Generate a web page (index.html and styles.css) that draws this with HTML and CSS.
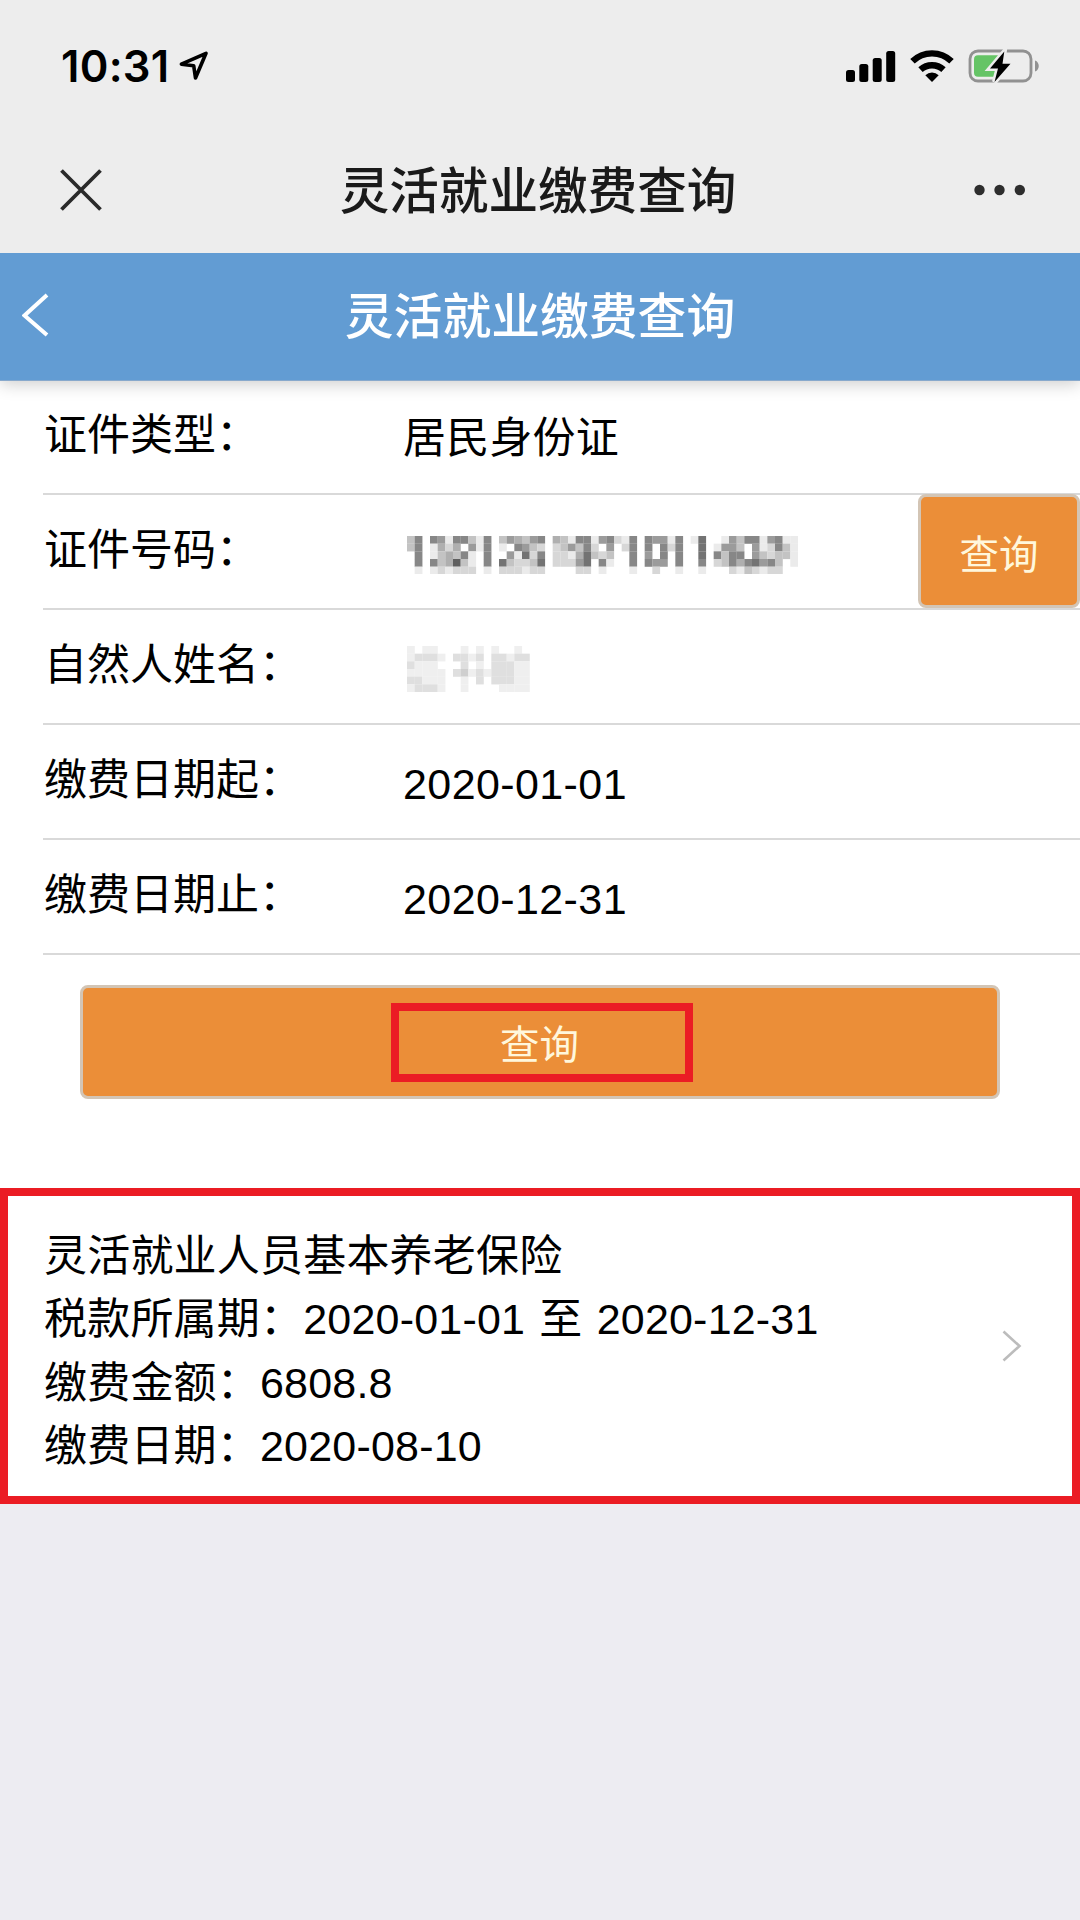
FILE: index.html
```html
<!DOCTYPE html>
<html lang="zh-CN">
<head>
<meta charset="utf-8">
<title>灵活就业缴费查询</title>
<link rel="stylesheet" href="styles.css">
</head>
<body>
<header class="top">
  <div class="status">
    <div class="status-left">
      <span class="clock">10:31</span>
      <svg class="location" width="30" height="30" viewBox="0 0 30 30"><path d="M2.4 13.2 27 2.3 16.5 27 14.7 14.8Z" fill="none" stroke="#000" stroke-width="3.6" stroke-linejoin="round"/></svg>
    </div>
    <div class="status-right">
      <svg width="50" height="32" viewBox="0 0 50 32"><rect x="0" y="20" width="9" height="12" rx="2.5"/><rect x="13.3" y="14" width="9" height="18" rx="2.5"/><rect x="26.7" y="8" width="9" height="24" rx="2.5"/><rect x="40.2" y="1" width="9" height="31" rx="2.5"/></svg>
      <svg class="wifi" width="44" height="33" viewBox="0 0 44 33"><path d="M2.5 11.300a28 28 0 0 1 39 0M10.500 19.700a17 17 0 0 1 23 0" fill="none" stroke="#000" stroke-width="6.400"/><path d="M15.300 25.200a10 10 0 0 1 13.400 0L22 32Z"/></svg>
      <svg class="battery" width="72" height="36" viewBox="0 0 72 36"><rect x="2" y="3" width="61" height="30" rx="8" fill="none" stroke="#919191" stroke-width="2.8"/><path d="M67 12.5c5 1.500 5 9.500 0 11z" fill="#919191"/><rect x="6" y="7.300" width="27" height="21.500" rx="4" fill="#65c466"/><path d="M36.300 3.500 22 20.500H30L26.500 34 42.500 15.800H34.500Z" fill="#000" stroke="#ededed" stroke-width="5" paint-order="stroke"/></svg>
    </div>
  </div>
  <div class="nav">
    <svg width="42" height="42" viewBox="0 0 42 42"><path d="M1.500 1.500l39 39m0-39l-39 39" stroke="#2a2a2a" stroke-width="3.800"/></svg>
    <h1 class="nav-title">灵活就业缴费查询</h1>
    <svg width="52" height="12" viewBox="0 0 52 12" fill="#2d2d2d"><circle cx="5.500" cy="6" r="5.200"/><circle cx="25.500" cy="6" r="5.200"/><circle cx="45.800" cy="6" r="5.200"/></svg>
  </div>
</header>
<div class="bar">
  <svg width="28" height="44" viewBox="0 0 28 44"><path d="M25 2 2.500 22.500 25 42" fill="none" stroke="#fff" stroke-width="4"/></svg>
  <h2 class="bar-title">灵活就业缴费查询</h2>
</div>
<main class="form">
  <div class="row"><span class="label">证件类型：</span><span class="value">居民身份证</span></div>
  <div class="row"><span class="label">证件号码：</span><svg class="mosaic" id="number-mask"></svg><button class="btn btn-small">查询</button></div>
  <div class="row"><span class="label">自然人姓名：</span><svg class="mosaic name" id="name-mask"></svg></div>
  <div class="row"><span class="label">缴费日期起：</span><span class="value date">2020-01-01</span></div>
  <div class="row"><span class="label">缴费日期止：</span><span class="value date">2020-12-31</span></div>
  <button class="btn btn-wide"><span class="mark">查询</span></button>
</main>
<section class="card">
  <div class="lines">
    <p>灵活就业人员基本养老保险</p>
    <p>税款所属期：2020-01-01 至 2020-12-31</p>
    <p>缴费金额：6808.8</p>
    <p>缴费日期：2020-08-10</p>
  </div>
  <svg width="20" height="32" viewBox="0 0 20 32"><path d="M1.500 1.500 17.500 16 1.500 30.500" fill="none" stroke="#bcbcbc" stroke-width="2.600"/></svg>
</section>
<script src="script.js"></script>
</body>
</html>
```
FILE: styles.css
```css
* { box-sizing: border-box; }
body {
  margin: 0;
  min-height: 1920px;
  background: #edecf2;
  color: #000;
  font-family: "Liberation Sans", "Noto Sans CJK SC", sans-serif;
  font-size: 43px;
}
h1, h2, p { margin: 0; }
svg { display: block; flex: none; }
.top {
  position: relative;
  z-index: 1;
  height: 253px;
  background: #ededed;
}
.status {
  height: 132px;
  padding: 0 40px 0 61px;
  display: flex;
  align-items: center;
  justify-content: space-between;
}
.status-left, .status-right { display: flex; align-items: center; }
.clock {
  font: 600 43.5px/50px Inter, sans-serif;
  width: 108px;
  letter-spacing: 0.3px;
  white-space: nowrap;
}
.location { margin-left: 10px; }
.wifi { margin-left: 14px; }
.battery { margin-left: 14px; }
.nav {
  height: 116px;
  padding: 0 54px 0 60px;
  display: flex;
  align-items: center;
  justify-content: space-between;
}
.nav-title {
  font: 500 49.6px/60px "Noto Sans CJK SC", sans-serif;
  padding-bottom: 6px;
  color: #1a1a1a;
}
.bar {
  position: relative;
  height: 128px;
  padding: 0 22px 3px;
  display: flex;
  align-items: center;
  background: #629cd3;
  border-bottom: 1px solid #88a9cc;
  box-shadow: 0 3px 16px rgba(0, 0, 0, 0.2);
}
.bar-title {
  flex: 1;
  padding: 0 28px 4px 0;
  text-align: center;
  font: 500 48.8px/60px "Noto Sans CJK SC", sans-serif;
  color: #fff;
}
.form {
  height: 807px;
  background: #fff;
  padding-left: 43px;
}
.row {
  height: 115.2px;
  display: flex;
  align-items: center;
  border-bottom: 2px solid #d9d9d9;
}
.row:first-child { height: 113.6px; }
.label { width: 360px; line-height: 60px; padding: 0 0 3px 1px; }
.value { line-height: 60px; padding-top: 2px; letter-spacing: 0.2px; }
.date { padding-top: 4px; letter-spacing: 0.4px; }
.mosaic { margin-left: 4px; margin-top: 7px; }
.name { margin-top: 5px; }
.btn {
  font: 400 39.5px/60px "Noto Sans CJK SC", sans-serif;
  color: #fff7dc;
  background: #eb8e38;
  border: 3px solid #d3c5b5;
  border-radius: 8px;
  padding: 0;
}
.btn-small { width: 162px; height: 114px; margin-left: auto; padding-top: 2px; }
.btn-wide {
  width: 920px;
  height: 114px;
  margin: 30px 0 0 37px;
  display: flex;
  align-items: center;
  justify-content: center;
}
.mark {
  width: 302px;
  height: 79px;
  margin-left: 4px;
  padding-right: 5px;
  border: 8px solid #eb1c24;
  display: flex;
  align-items: center;
  justify-content: center;
}
.card {
  height: 316px;
  padding: 0 50px 0 36px;
  display: flex;
  align-items: center;
  justify-content: space-between;
  background: #fff;
  border: 8px solid #eb1c24;
}
.lines {
  padding-top: 11px;
  line-height: 63.3px;
  letter-spacing: 0.2px;
  word-spacing: 2px;
  white-space: nowrap;
}
```
FILE: script.js
```js
// Masked fields: each digit is the darkness of one block.
const masks = {
  "number-mask": [
    "360651663160354356043166156216065516017001536615611",
    "360142405160106532023536205026060626007015530512631",
    "060134361060051726022147323006050606007063660532331",
    "060634831060732237022257061006065506006023646756301",
    "010121222010222122000022010001002001001000213212200"
  ],
  "name-mask": [
    "1011000101010010",
    "1222102212022122",
    "2111000201022211",
    "1111102312122211",
    "2211100102022211",
    "1222100100001111"
  ]
};
const cell = 23 / 3;
for (const [id, rows] of Object.entries(masks)) {
  const svg = document.getElementById(id);
  svg.setAttribute("width", rows[0].length * cell);
  svg.setAttribute("height", rows.length * cell);
  rows.forEach((row, y) => [...row].forEach((level, x) => {
    if (level === "0") return;
    const rect = document.createElementNS("http://www.w3.org/2000/svg", "rect");
    const tone = 255 - level * (id === "name-mask" ? 16 : 20);
    rect.setAttribute("x", x * cell);
    rect.setAttribute("y", y * cell);
    rect.setAttribute("width", cell + 0.1);
    rect.setAttribute("height", cell + 0.1);
    rect.setAttribute("fill", `rgb(${tone},${tone},${tone})`);
    svg.appendChild(rect);
  }));
}
```
